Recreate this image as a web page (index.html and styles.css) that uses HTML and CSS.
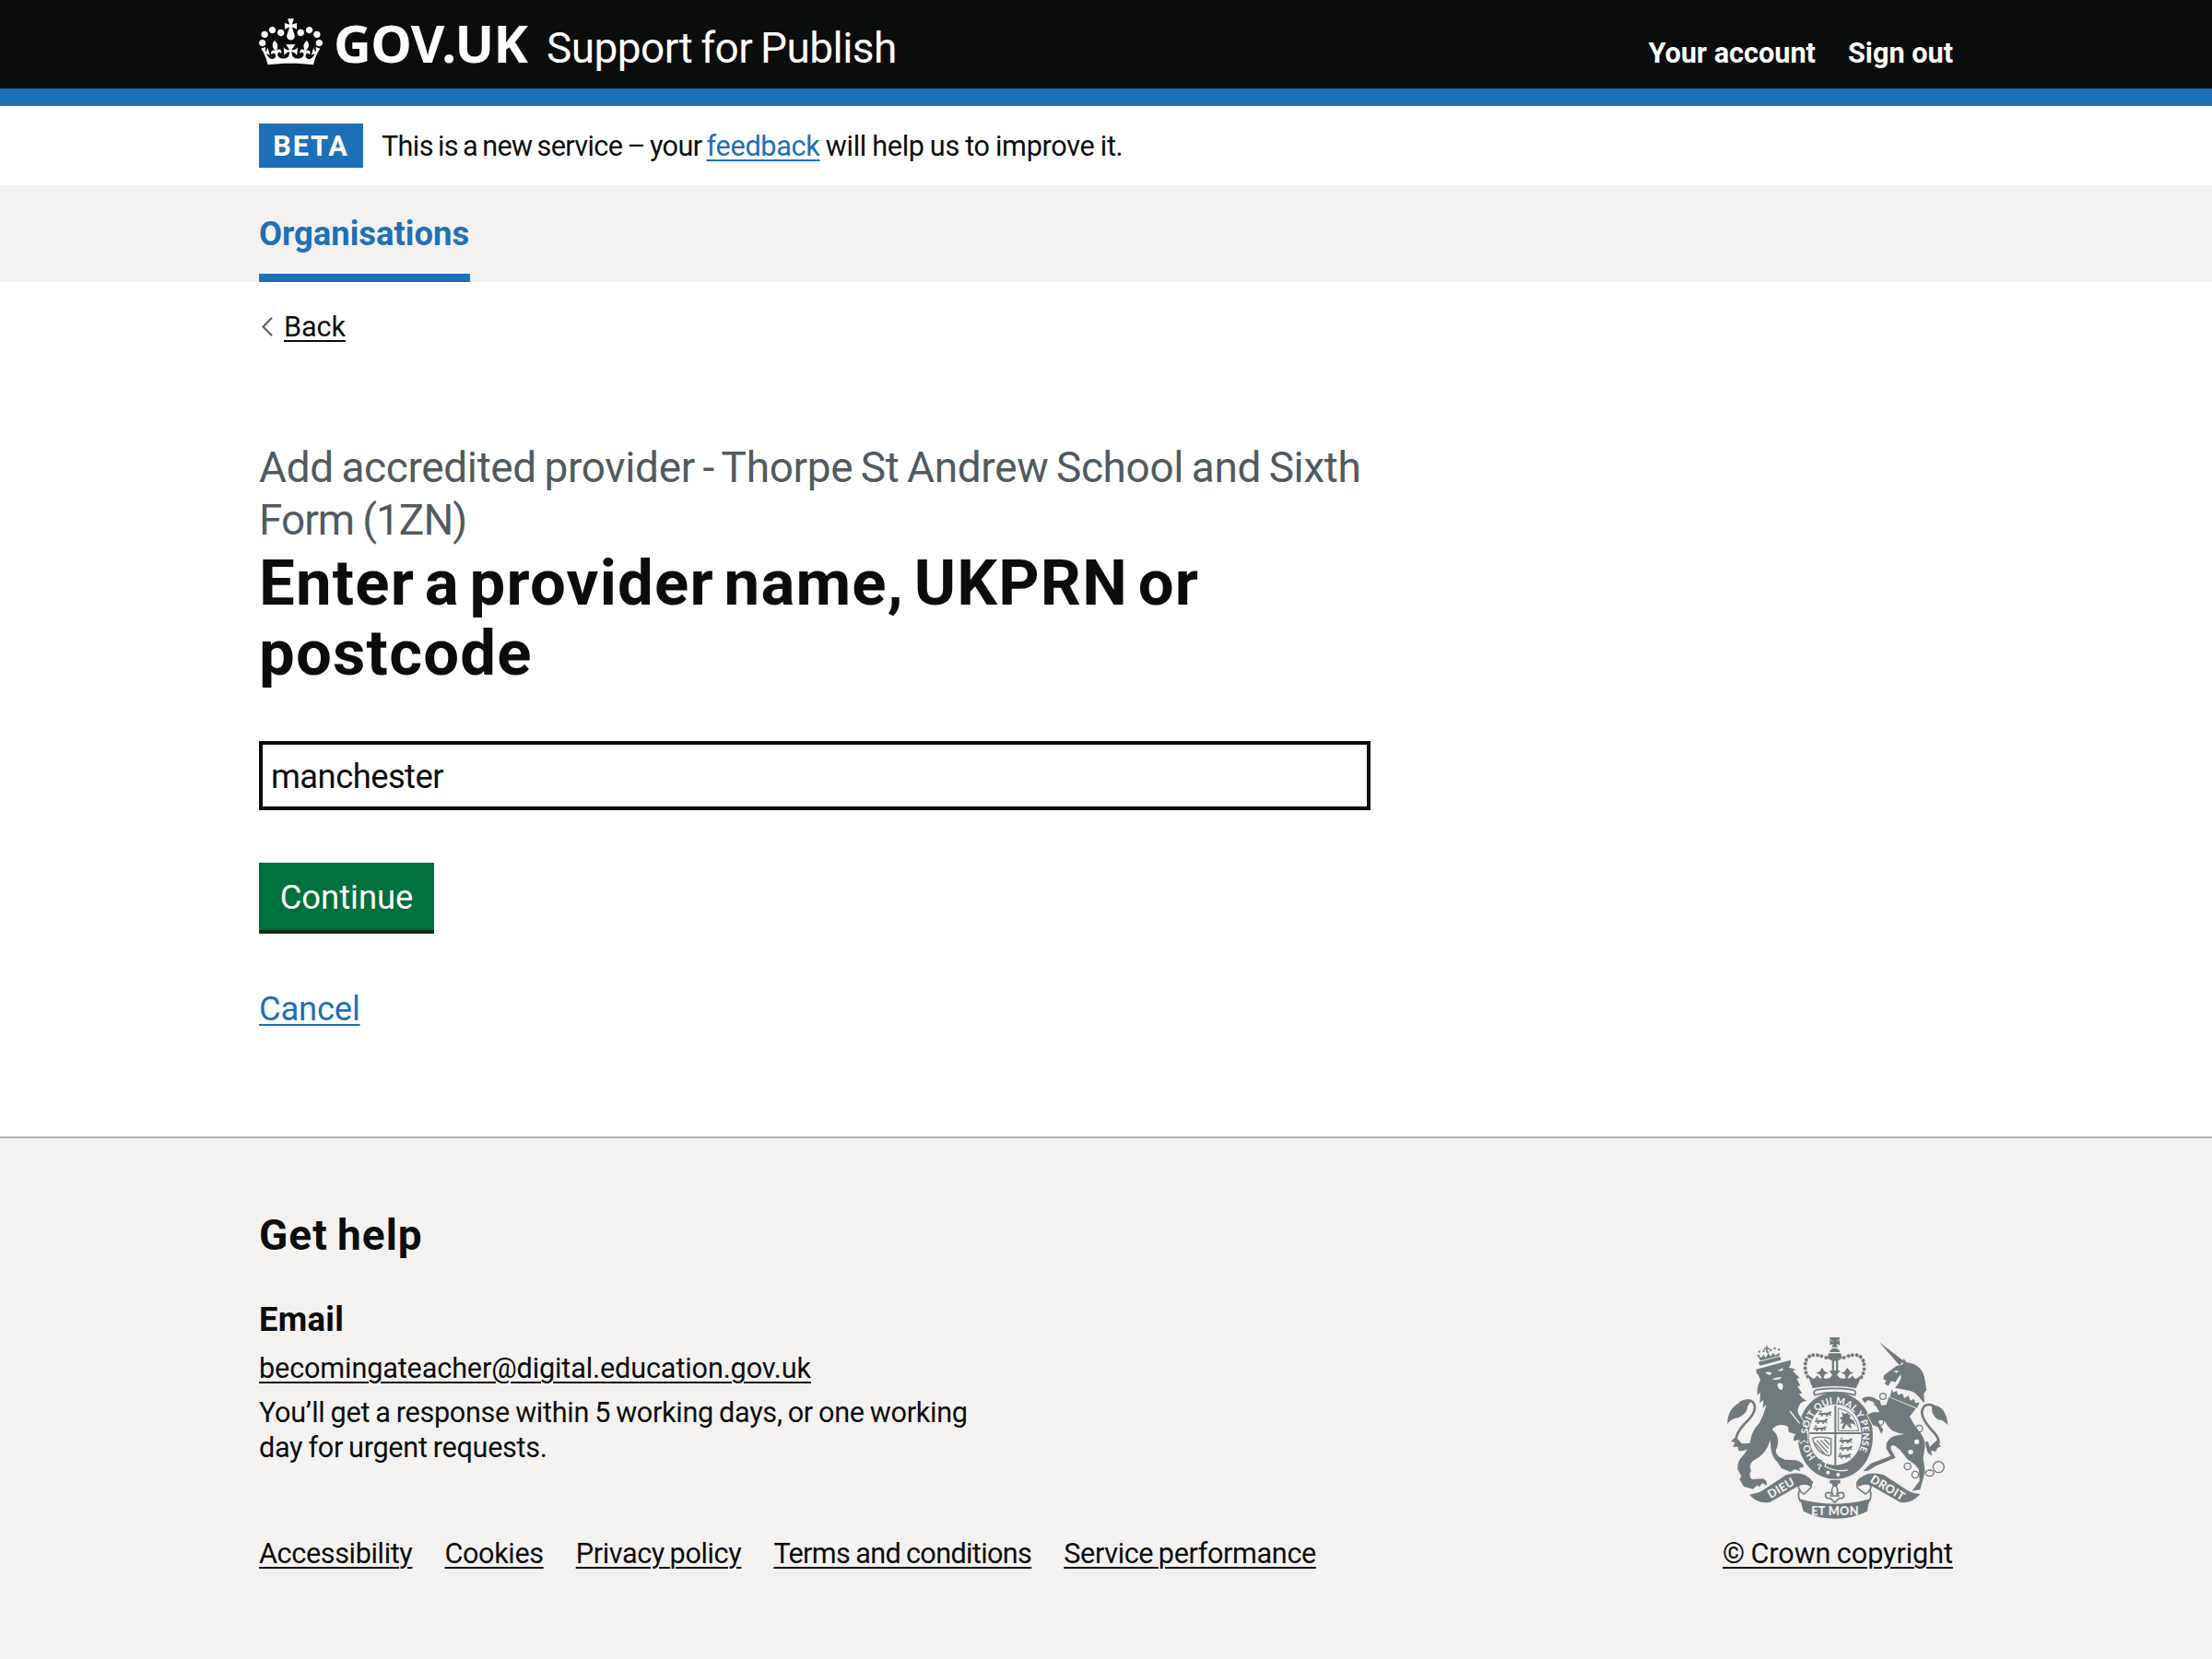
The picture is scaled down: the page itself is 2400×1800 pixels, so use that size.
FILE: index.html
```html
<!DOCTYPE html>
<html lang="en">
<head>
<meta charset="utf-8">
<title>Enter a provider name, UKPRN or postcode - Support for Publish</title>
<link rel="stylesheet" href="styles.css">
</head>
<body>
<header class="header">
  <div class="container header-row">
    <svg class="crown" viewBox="0 0 132 97" aria-hidden="true"><path d="M25 30.2c3.5 1.5 7.7-.2 9.1-3.7 1.5-3.6-.2-7.8-3.9-9.2-3.6-1.4-7.6.3-9.1 3.9-1.4 3.5.3 7.5 3.9 9zM9 39.5c3.6 1.5 7.8-.2 9.2-3.7 1.5-3.6-.2-7.8-3.9-9.1-3.6-1.5-7.6.2-9.1 3.8-1.4 3.5.3 7.5 3.8 9zM4.4 57.2c3.5 1.5 7.7-.2 9.1-3.8 1.5-3.6-.2-7.7-3.9-9.1-3.5-1.5-7.6.3-9.1 3.8-1.4 3.5.3 7.6 3.9 9.1zm38.3-21.4c3.5 1.5 7.7-.2 9.1-3.8 1.5-3.6-.2-7.7-3.9-9.1-3.6-1.5-7.6.3-9.1 3.8-1.3 3.6.4 7.7 3.9 9.1zm64.4-5.6c-3.6 1.5-7.8-.2-9.1-3.7-1.5-3.6.2-7.8 3.8-9.2 3.6-1.4 7.7.3 9.2 3.9 1.3 3.5-.4 7.5-3.9 9zm15.9 9.3c-3.6 1.5-7.7-.2-9.1-3.7-1.5-3.6.2-7.8 3.7-9.1 3.6-1.5 7.7.2 9.2 3.8 1.5 3.5-.3 7.5-3.8 9zm4.7 17.7c-3.6 1.5-7.8-.2-9.2-3.8-1.5-3.6.2-7.7 3.9-9.1 3.6-1.5 7.7.3 9.2 3.8 1.3 3.5-.4 7.6-3.9 9.1zM89.3 35.8c-3.6 1.5-7.8-.2-9.2-3.8-1.4-3.6.2-7.7 3.9-9.1 3.6-1.5 7.7.3 9.2 3.8 1.4 3.6-.3 7.7-3.9 9.1zM69.7 17.7l8.9 4.7V9.3l-8.9 2.8c-.2-.3-.5-.6-.9-.9L72.4 0H59.6l3.5 11.2c-.3.3-.6.5-.9.9l-8.8-2.8v13.1l8.8-4.7c.3.3.6.7.9.9l-5 15.4v.1c-.2.8-.4 1.6-.4 2.4 0 4.1 3.1 7.5 7 8.1h.2c.3 0 .7.1 1 .1.4 0 .7 0 1-.1h.2c4-.6 7.1-4.1 7.1-8.1 0-.8-.1-1.7-.4-2.4V34l-5.1-15.4c.4-.2.7-.6 1-.9zM66 92.8c16.9 0 32.8 1.1 47.1 3.2 4-16.9 8.9-26.7 14-33.5l-9.6-3.4c1 4.9 1.1 7.2 0 10.2-1.5-1.4-3-4.3-4.2-8.7L108.6 76c2.8-2 5-3.2 7.5-3.3-4.4 9.4-10 11.9-13.6 11.2-4.3-.8-6.3-4.6-5.6-7.9 1-4.7 5.7-5.9 8-.5 4.3-8.7-3-11.4-7.6-8.8 7.1-7.2 7.9-13.5 2.1-21.1-8 6.1-8.1 12.3-4.5 20.8-4.7-5.4-12.1-2.5-9.5 6.2 3.4-5.2 7.9-2 7.2 3.1-.6 4.3-6.4 7.8-13.5 7.2-10.3-.9-10.9-8-11.2-13.8 2.5-.5 7.1 1.8 11 7.3L80.2 60c-4.1 4.4-8 5.3-12.3 5.4 1.4-4.4 8-11.6 8-11.6H55.5s6.4 7.2 7.9 11.6c-4.2-.1-8-1-12.3-5.4l1.4 16.4c3.9-5.5 8.5-7.7 10.9-7.3-.3 5.8-.9 12.8-11.1 13.8-7.2.6-12.9-2.9-13.5-7.2-.7-5 3.8-8.3 7.1-3.1 2.7-8.7-4.6-11.6-9.4-6.2 3.7-8.5 3.6-14.7-4.6-20.8-5.8 7.6-5 13.9 2.2 21.1-4.7-2.6-11.9.1-7.7 8.8 2.3-5.5 7.1-4.2 8.1.5.7 3.3-1.3 7.1-5.7 7.9-3.5.7-9-1.8-13.5-11.2 2.5.1 4.7 1.3 7.5 3.3l-4.7-15.4c-1.2 4.4-2.7 7.2-4.3 8.7-1.1-3-.9-5.3 0-10.2l-9.5 3.4c5 6.9 9.9 16.7 14 33.5 14.8-2.1 30.8-3.2 47.7-3.2z"/></svg>
    <span class="logo-text">GOV.UK</span>
    <span class="service-name">Support for Publish</span>
    <nav class="account-nav">
      <a class="account-link">Your account</a>
      <a class="account-link">Sign out</a>
    </nav>
  </div>
</header>

<div class="container phase-banner">
  <strong class="tag">BETA</strong>
  <span class="phase-text"><span class="phase-lead">This is a new service – your </span><a class="link">feedback</a> will help us to improve it.</span>
</div>

<nav class="primary-nav">
  <div class="container"><a class="primary-link">Organisations</a></div>
</nav>

<main class="container main">
  <a class="back">
    <svg class="chevron" viewBox="0 0 12 21" aria-hidden="true"><path d="M11 .8 1.5 10.5 11 20.2"/></svg>
    <span class="back-text">Back</span>
  </a>
  <form class="form">
    <span class="caption">Add accredited provider - Thorpe St Andrew School and Sixth <span class="code">Form (1ZN)</span></span>
    <h1 class="title">Enter a provider name, UKPRN or postcode</h1>
    <input class="input" type="text" value="manchester" aria-label="Provider">
    <button class="button" type="button">Continue</button>
    <a class="link cancel">Cancel</a>
  </form>
</main>

<footer class="footer">
  <div class="container footer-row">
    <div class="footer-main">
      <h2 class="help-title">Get help</h2>
      <h3 class="help-subtitle">Email</h3>
      <a class="footer-link email">becomingateacher@digital.education.gov.uk</a>
      <p class="help-text">You’ll get a response within 5 working days, or one working day for urgent requests.</p>
      <div class="footer-links">
        <a class="footer-link">Accessibility</a>
        <a class="footer-link">Cookies</a>
        <a class="footer-link">Privacy policy</a>
        <a class="footer-link terms">Terms and conditions</a>
        <a class="footer-link">Service performance</a>
      </div>
    </div>
    <div class="copyright">
      <svg class="arms" viewBox="0 0 744 624" aria-hidden="true">
        <defs>
          <path id="motto" d="M309 417A89 102 0 1 1 419 417Q400 434 380 438"/>
          <g id="passant"><path d="M0 6q6-8 12-4l20-1q5-5 12-3l-2 5-4 3 6 4-5 1-6-3-3 6-5-1 2-4-10-1-4 6-5-1 2-6q-8 4-9-1z"/><path d="M2 0l6-6 6 3-5 2z"/></g>
        </defs>

        <!-- garter -->
        <path class="ink" fill-rule="evenodd" d="M364 197C432 197 486 254 486 338S432 479 364 479 242 422 242 338 296 197 364 197zM364 236C317 236 278 278 278 336S317 434 364 434 449 394 449 336 411 236 364 236z"/>

        <!-- lion -->
        <path class="beast" d="M107 122L218 92Q222 104 213 116L234 122 226 128 248 150 238 152 250 176 240 176 256 200 246 202Q258 222 272 224 252 226 246 240 236 262 250 276L266 300Q276 330 274 360L262 352 252 362 244 350 230 356Q224 342 236 334L212 326 210 308 196 304Q172 300 158 318 186 340 174 378 160 400 200 416L236 418Q262 426 260 440L246 444 250 454 232 448 218 456 188 444 176 424Q158 410 154 378L152 352Q140 400 96 420 80 434 90 452 80 466 92 480L128 478Q144 484 140 500L126 492 118 504 108 500 96 512 66 504 52 480 58 470 46 448Q44 420 62 404 84 380 88 350 94 320 116 298 132 270 140 236L128 248 130 222 118 232 120 198 110 206Q108 176 120 158L114 142Q104 134 107 122Z"/>
        <path class="line" d="M88 367Q62 388 44 364 32 340 68 300 116 256 96 229 80 216 52 232" stroke-width="8"/>
        <path class="ink" d="M76 222Q14 236 12 300 28 280 48 280 78 266 78 244L88 228ZM40 342L24 356 38 360 30 374 46 374 50 388Q72 388 92 374L88 362 60 364Z"/>
        <path class="paper" d="M136 132q16-4 22 4-10 10-22-4zM176 126l18-8q0 14-18 8zM158 154q14-6 30-8l-2 6-10 4-10 0zM176 168q14-6 18 8 0 12-8 14-12-8-10-22z"/>
        <path class="cut" d="M216 258l32 40"/>
        <path class="ink" d="M114 98L184 80 187 92 118 110ZM120 94L112 78 124 84 130 74 137 85 146 70 154 80 162 68 168 77 182 68 182 78Z"/>
        <path class="beads" d="M114 78Q110 62 126 62 140 62 146 68 156 54 168 54 184 54 184 68" stroke-width="7"/>
        <path class="line" d="M141 46v20M132 55h18" stroke-width="5"/>

        <!-- unicorn -->
        <path class="ink" d="M506 33L588 96 572 108Z"/>
        <path class="ink" d="M562 112L584 106 586 86 596 100Q650 106 656 160L661 190 652 200 654 232 644 222Q626 196 606 192L558 182Q580 160 578 138 566 150 560 164L546 160 536 176 524 168 530 160 520 154 522 142Z"/>
        <path class="beast" d="M538 212L626 250 606 276Q618 300 632 318 662 350 654 384L650 410 656 456 640 514 614 518 628 498 638 486 636 450Q626 430 600 416L574 384 556 370Q540 368 546 384L560 410 498 436 470 452 454 454 480 428 524 412 544 404 530 380Q526 348 560 338L590 332Q550 330 536 308L524 290Q504 284 502 294L520 318 514 332 502 310 486 304 468 270 486 262 508 262 500 248 492 230 470 222 460 232 450 218Q462 208 484 212L508 226 514 240 530 238Z"/>
        <path class="paper" d="M552 128l18-2-6 8z"/>
        <path class="ink" d="M548 186L552 198 564 192 568 206 582 200 588 216 602 208 608 224 620 218 624 232 638 230 630 248 542 212Z"/>
        <path class="line" d="M662 378Q690 388 700 362 704 346 676 318 630 266 654 242 672 230 688 246" stroke-width="8"/>
        <path class="ink" d="M680 238Q726 242 730 304 714 284 698 286 678 272 678 248ZM656 360Q668 350 670 376L702 346 700 366 708 372 694 380 692 390 676 386 678 404 664 392Z"/>
        <g class="ring"><circle cx="519" cy="210" r="10"/><circle cx="500" cy="232" r="9"/><ellipse cx="512" cy="290" rx="9" ry="14"/><circle cx="637" cy="315" r="11"/><circle cx="599" cy="438" r="11"/><circle cx="624" cy="465" r="11"/><ellipse cx="671" cy="460" rx="13" ry="10"/><circle cx="700" cy="440" r="18"/></g>
        <circle class="paper" cx="629" cy="358" r="8"/><circle class="paper" cx="609" cy="391" r="8"/>

        <!-- shield -->
        <path class="line" d="M364 240v194M280 330h168" stroke-width="6"/>
        <path class="line" d="M374 248v74h66q-6-60-66-74z" stroke-width="3"/>
        <g class="ink">
          <use href="#passant" x="308" y="262"/><use href="#passant" x="296" y="286"/><use href="#passant" x="292" y="310"/>
          <use href="#passant" x="376" y="350"/><use href="#passant" x="376" y="374"/><use href="#passant" x="372" y="399"/>
          <path d="M384 260l10 8 8-4 12 10-4 8 14 6 8 20-8-8-12-2 6 18-10-6-8-10-8 16-8 0 8-20-12 4 6-12-8-8 10-4z"/>
        </g>
        <path class="line" d="M290 346Q318 338 350 348V398Q344 406 338 402 300 392 290 346ZM304 354L340 394M316 352L342 380M328 350L346 368M298 362L330 398" stroke-width="4"/>
        <text class="motto"><textPath href="#motto" startOffset="12">HO&#160;&#160;&#160;&#160;SOIT QUI MAL Y PENSE</textPath></text>

        <!-- buckle -->
        <path class="line" d="M300 452Q284 436 300 422 316 412 328 426 320 436 326 444 376 468 420 452" stroke-width="5"/>
        <path class="cut" d="M320 420Q338 424 330 438 370 458 404 450M306 434q10-6 12 2-10 4-6 14"/>
        <circle class="paper" cx="340" cy="458" r="6"/><circle class="paper" cx="373" cy="465" r="6"/>

        <!-- crown -->
        <path class="ink" d="M346 18h32v6l-10 5v2l10-5v18l-10-5v2l4 9h-20l4-9v-2l-10 5V26l10 5v-2l-10-5z"/>
        <path class="ink" d="M345 66Q348 54 362 53 376 54 379 66ZM342 70H382L386 86Q362 104 338 86ZM353 94h7v32h-7zM366 94h7v32h-7z"/>
        <path class="beads" d="M334 84Q262 56 266 120 268 142 282 156M392 84Q460 56 458 120 456 142 442 156" stroke-width="12"/>
        <path class="ink" d="M274 140L294 154 306 142Q312 156 320 150L312 138 300 134 312 130 321 116 330 130 342 134 330 138 326 150Q338 156 348 148L354 140 344 126H380L370 140 376 148Q386 156 398 150L394 138 382 134 394 130 403 116 412 130 424 134 412 138 404 150Q412 156 418 142L430 154 450 140 432 184Q362 170 290 184Z"/>
        <path class="ribbon" d="M297 206Q288 190 310 188 362 180 414 188 436 190 428 206 362 188 297 206Z"/>

        <!-- ribbon and badge -->
        <path class="ribbon" d="M276 478Q290 494 284 508L262 528Q246 520 244 504 246 492 270 486ZM444 478Q430 494 436 508L462 528Q478 520 480 504 478 492 454 486Z"/>
        <path class="line" d="M250 512Q238 530 250 552M474 512Q486 530 474 552" stroke-width="5"/>
        <path class="ink" d="M84 530Q118 526 140 508L204 466Q264 448 292 490L284 504Q264 492 244 502L152 554Q112 562 84 530ZM640 528Q608 526 586 508L522 466Q462 448 432 490L440 504Q462 492 482 502L574 554Q612 562 640 528Z"/>
        <path class="ink" d="M246 544Q362 576 478 544 470 560 468 584 422 608 364 608 306 608 260 584 256 560 246 544Z"/>
        <text class="word" transform="translate(194 520) rotate(-30)">DIEU</text>
        <text class="word" transform="translate(363 597)">ET MON</text>
        <text class="word" transform="translate(528 519) rotate(31)">DROIT</text>
        <path class="ink" d="M346 482H380V494H372V502H354V494H346Z"/>
        <path class="ribbon" d="M362 498Q378 514 368 530 388 516 392 530 394 544 376 542L362 556 348 542Q330 544 332 530 336 516 356 530 346 514 362 498ZM346 534H378"/>
      </svg>
      <a class="footer-link crown-copy">© Crown copyright</a>
    </div>
  </div>
</footer>
</body>
</html>
```

FILE: styles.css
```css
* { box-sizing: border-box; }
body {
  margin: 0;
  background: #fff;
  color: #0b0c0c;
  font-family: Roboto, "Liberation Sans", sans-serif;
  font-size: 30.64px;
  line-height: 38.3px;
  letter-spacing: -.01em;
  word-spacing: -.075em;
}
h1, h2, h3, p { margin: 0; }
.container { width: 1838px; margin: 0 auto; }

.header { background: #0b0c0c; color: #fff; height: 115px; border-bottom: 19px solid #1d70b8; }
.header-row { display: flex; align-items: baseline; padding-top: 18px; }
.crown { width: 69px; height: 51px; fill: #fff; align-self: flex-start; margin: 2px 12px 0 0; }
.logo-text { font: 700 56.4px/57.4px "Noto Sans", sans-serif; letter-spacing: -.5px; width: 231px; }
.service-name { font-size: 45.96px; line-height: 57.4px; letter-spacing: -.55px; word-spacing: -2px; }
.account-nav { display: flex; gap: 35px; margin-left: auto; }
.account-link { font-weight: 700; letter-spacing: 0; word-spacing: 0; }

.phase-banner { display: flex; align-items: center; height: 86px; }
.tag { width: 113px; height: 48px; background: #1d70b8; color: #fff; line-height: 50px; letter-spacing: 1.9px; text-align: center; margin-right: 20px; }
.phase-text { height: 48px; line-height: 50px; letter-spacing: -.3px; word-spacing: -1.1px; }
.phase-lead { letter-spacing: -.65px; word-spacing: -1.8px; }
.link { color: #1d70b8; text-decoration: underline; text-decoration-thickness: 2px; text-underline-offset: 4px; }

.primary-nav { background: #f3f2f1; height: 105px; }
.primary-link { display: block; width: 229px; height: 105px; padding-top: 10px; border-bottom: 9px solid #1d70b8; color: #1d70b8; font-size: 36.4px; line-height: 86px; font-weight: 700; letter-spacing: 0; }

.main { height: 927px; padding-top: 30px; }
.back { display: flex; align-items: center; gap: 12px; padding-left: 3px; height: 38px; }
.chevron { width: 12px; height: 21px; fill: none; stroke: #505a5f; stroke-width: 2; margin-bottom: 2px; }
.back-text { letter-spacing: -.1px; text-decoration: underline; text-decoration-thickness: 2px; text-underline-offset: 4px; }
.form { width: 1206px; margin-top: 105px; display: flex; flex-direction: column; align-items: flex-start; }
.caption { color: #505a5f; font-size: 45.96px; line-height: 57.4px; letter-spacing: -.35px; word-spacing: -2.4px; }
.code { letter-spacing: -.95px; word-spacing: -1.5px; }
.title { margin-top: 1px; font-size: 68.9px; line-height: 76.6px; font-weight: 700; letter-spacing: 1.2px; word-spacing: -7.6px; }
.input { width: 100%; height: 75px; margin-top: 56px; padding: 1px 9px 0; border: 4px solid #0b0c0c; background: #fff; color: #0b0c0c; font-family: inherit; font-size: 36.4px; letter-spacing: -.55px; }
.button { width: 190px; height: 73px; margin-top: 57px; padding: 2px 0 0; border: 0; background: #00703c; box-shadow: 0 4px 0 #002d18; color: #fff; font-family: inherit; font-size: 36.4px; letter-spacing: 0; }
.cancel { margin-top: 62px; font-size: 36.4px; line-height: 48px; letter-spacing: -.2px; }

.footer { height: 567px; padding-top: 77px; border-top: 2px solid #b1b4b6; background: #f3f2f1; }
.footer-row { display: flex; justify-content: space-between; align-items: flex-end; }
.help-title { font-size: 45.96px; line-height: 57.4px; letter-spacing: 1px; word-spacing: -2px; }
.help-subtitle { margin-top: 39px; font-size: 36.4px; line-height: 48px; letter-spacing: .3px; }
.footer-link { color: #0b0c0c; white-space: nowrap; text-decoration: underline; text-decoration-thickness: 2px; text-underline-offset: 4px; }
.email { display: block; margin-top: 10px; letter-spacing: -.14px; }
.help-text { width: 800px; margin-top: 9px; letter-spacing: -.3px; word-spacing: -1.2px; }
.footer-links { display: flex; gap: 35px; margin-top: 77px; }
.footer-links .footer-link { letter-spacing: -.38px; word-spacing: -1.6px; }
.footer-links .terms { letter-spacing: -.65px; word-spacing: -1px; }
.copyright { width: 250px; display: flex; flex-direction: column; align-items: flex-start; gap: 14px; }
.crown-copy { letter-spacing: -.1px; word-spacing: -1px; }

.arms { width: 248px; height: 208px; margin-left: 1px; display: block; }
.ink { fill: #707a7d; }
.beast { fill: #707a7d; stroke: #f3f2f1; stroke-width: 5; paint-order: stroke; }
.paper { fill: #f3f2f1; }
.line { fill: none; stroke: #707a7d; }
.cut { fill: none; stroke: #f3f2f1; stroke-width: 4; }
.ring { fill: none; stroke: #707a7d; stroke-width: 4; }
.ribbon { fill: #f3f2f1; stroke: #707a7d; stroke-width: 5; }
.beads { fill: none; stroke: #707a7d; stroke-linecap: round; stroke-dasharray: .1 14; }
.motto { fill: #f3f2f1; font: 900 31px Lato, sans-serif; letter-spacing: .5px; word-spacing: 0; }
.word { fill: #f3f2f1; font: 900 38px Lato, sans-serif; letter-spacing: 1px; word-spacing: 0; text-anchor: middle; }
```
